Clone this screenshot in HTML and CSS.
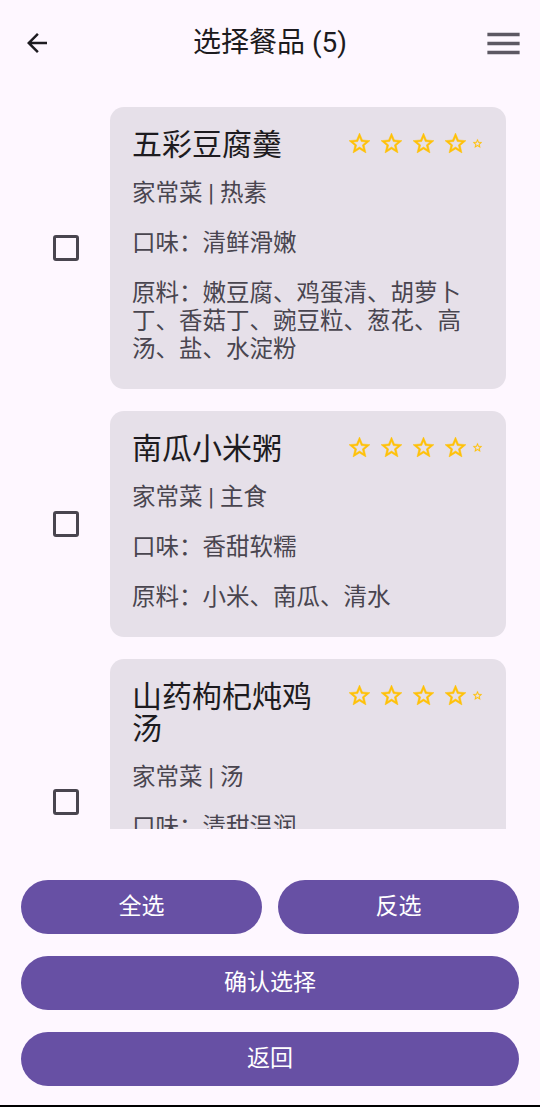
FILE: index.html
```html
<!DOCTYPE html>
<html lang="zh-CN">
<head>
  <meta charset="UTF-8">
  <meta name="viewport" content="width=device-width, initial-scale=1.0">
  <title>选择餐品</title>
  <link rel="stylesheet" href="styles.css">
</head>
<body>
  <svg class="defs" aria-hidden="true">
    <symbol id="star" viewBox="0 0 24 24">
      <path d="M22 9.24l-7.19-.62L12 2 9.19 8.63 2 9.24l5.46 4.73L5.82 21 12 17.27 18.18 21l-1.63-7.03L22 9.24zM12 15.4l-3.76 2.27 1-4.28-3.32-2.88 4.38-.38L12 6.1l1.71 4.04 4.38.38-3.32 2.88 1 4.28L12 15.4z"/>
    </symbol>
  </svg>

  <div class="page">
    <header class="topbar">
      <button class="icon-btn back">
        <svg viewBox="0 0 24 24"><path d="M20 11H7.83l5.59-5.59L12 4l-8 8 8 8 1.41-1.41L7.83 13H20v-2z"/></svg>
      </button>
      <h1 class="title">选择餐品 (5)</h1>
      <button class="icon-btn menu">
        <svg viewBox="0 0 24 24"><path d="M3 18h18v-2H3v2zm0-5h18v-2H3v2zm0-7v2h18V6H3z"/></svg>
      </button>
    </header>

    <div class="dish-list">
      <div class="dish-row">
        <input type="checkbox" class="check">
        <div class="dish-card">
          <div class="card-head">
            <h2 class="dish-name">五彩豆腐羹</h2>
            <div class="stars">
              <svg class="star"><use href="#star"/></svg>
              <svg class="star"><use href="#star"/></svg>
              <svg class="star"><use href="#star"/></svg>
              <svg class="star"><use href="#star"/></svg>
              <svg class="star small"><use href="#star"/></svg>
            </div>
          </div>
          <p class="tags">家常菜 | 热素</p>
          <p class="info">口味：清鲜滑嫩</p>
          <p class="info">原料：嫩豆腐、鸡蛋清、胡萝卜丁、香菇丁、豌豆粒、葱花、高汤、盐、水淀粉</p>
        </div>
      </div>

      <div class="dish-row">
        <input type="checkbox" class="check">
        <div class="dish-card">
          <div class="card-head">
            <h2 class="dish-name">南瓜小米粥</h2>
            <div class="stars">
              <svg class="star"><use href="#star"/></svg>
              <svg class="star"><use href="#star"/></svg>
              <svg class="star"><use href="#star"/></svg>
              <svg class="star"><use href="#star"/></svg>
              <svg class="star small"><use href="#star"/></svg>
            </div>
          </div>
          <p class="tags">家常菜 | 主食</p>
          <p class="info">口味：香甜软糯</p>
          <p class="info">原料：小米、南瓜、清水</p>
        </div>
      </div>

      <div class="dish-row">
        <input type="checkbox" class="check">
        <div class="dish-card">
          <div class="card-head">
            <h2 class="dish-name">山药枸杞炖鸡汤</h2>
            <div class="stars">
              <svg class="star"><use href="#star"/></svg>
              <svg class="star"><use href="#star"/></svg>
              <svg class="star"><use href="#star"/></svg>
              <svg class="star"><use href="#star"/></svg>
              <svg class="star small"><use href="#star"/></svg>
            </div>
          </div>
          <p class="tags">家常菜 | 汤</p>
          <p class="info">口味：清甜温润</p>
          <p class="info">原料：鸡腿肉、山药、枸杞、红枣、姜片、葱段、盐</p>
        </div>
      </div>

      <div class="dish-row">
        <input type="checkbox" class="check">
        <div class="dish-card">
          <div class="card-head">
            <h2 class="dish-name">番茄炒蛋</h2>
            <div class="stars">
              <svg class="star"><use href="#star"/></svg>
              <svg class="star"><use href="#star"/></svg>
              <svg class="star"><use href="#star"/></svg>
              <svg class="star"><use href="#star"/></svg>
              <svg class="star small"><use href="#star"/></svg>
            </div>
          </div>
          <p class="tags">家常菜 | 热荤</p>
          <p class="info">口味：酸甜可口</p>
          <p class="info">原料：番茄、鸡蛋、葱花、盐、糖</p>
        </div>
      </div>

      <div class="dish-row">
        <input type="checkbox" class="check">
        <div class="dish-card">
          <div class="card-head">
            <h2 class="dish-name">清炒时蔬</h2>
            <div class="stars">
              <svg class="star"><use href="#star"/></svg>
              <svg class="star"><use href="#star"/></svg>
              <svg class="star"><use href="#star"/></svg>
              <svg class="star"><use href="#star"/></svg>
              <svg class="star small"><use href="#star"/></svg>
            </div>
          </div>
          <p class="tags">家常菜 | 热素</p>
          <p class="info">口味：清淡爽口</p>
          <p class="info">原料：青菜、蒜末、盐</p>
        </div>
      </div>
    </div>

    <footer class="actions">
      <div class="action-row">
        <button class="pill">全选</button>
        <button class="pill">反选</button>
      </div>
      <button class="pill">确认选择</button>
      <button class="pill">返回</button>
    </footer>

    <div class="nav-bar"></div>
  </div>
</body>
</html>
```

FILE: styles.css
```css
body {
  margin: 0;
  background-color: #fef7ff;
  font-family: Roboto, "Noto Sans CJK SC", sans-serif;
  color: #1d1b20;
}

.defs {
  position: absolute;
  width: 0;
  height: 0;
}

.page {
  display: flex;
  flex-direction: column;
  height: 1107px;
}

/* top app bar */
.topbar {
  display: grid;
  grid-template-columns: 1fr auto 1fr;
  align-items: center;
  height: 86px;
  padding: 0 15px;
}

.icon-btn {
  display: flex;
  padding: 0;
  border: none;
  background: none;
}

.back {
  justify-self: start;
  margin-left: 7px;
}

.back svg {
  width: 30px;
  height: 30px;
  fill: #1d1b20;
}

.menu {
  justify-self: end;
}

.menu svg {
  width: 43px;
  height: 43px;
  fill: #5d5863;
}

.title {
  margin: 0;
  font-size: 28px;
  font-weight: 400;
  line-height: 36px;
}

/* dish list */
.dish-list {
  height: 743px;
  overflow: hidden;
  padding-top: 21px;
  box-sizing: border-box;
  flex: none;
}

.dish-row {
  display: flex;
  align-items: center;
  gap: 31px;
  padding: 0 34px 0 53px;
  margin-bottom: 22px;
}

.check {
  appearance: none;
  flex: none;
  width: 26px;
  height: 26px;
  margin: 0;
  border: 3px solid #49454f;
  border-radius: 3px;
  box-sizing: border-box;
}

.dish-card {
  flex: 1;
  background-color: #e6e0e9;
  border-radius: 14px;
  padding: 22px 24px 26px 22px;
}

.card-head {
  display: flex;
  align-items: flex-start;
  gap: 10px;
}

.dish-name {
  flex: 1;
  margin: 0;
  font-size: 30px;
  font-weight: 400;
  line-height: 32px;
  color: #1d1b20;
}

.stars {
  display: flex;
  align-items: center;
  gap: 7px;
  margin: 2px -1px 0 0;
}

.star {
  width: 25px;
  height: 25px;
  fill: #ffc107;
  stroke: #ffc107;
  stroke-width: 0.5;
}

.star.small {
  width: 11px;
  height: 11px;
  margin-left: -2.5px;
}

.tags,
.info {
  margin: 22px 0 0;
  font-size: 23.5px;
  line-height: 28px;
  color: #49454f;
}

.tags {
  margin-top: 18px;
}

/* bottom buttons */
.actions {
  display: flex;
  flex-direction: column;
  gap: 22px;
  padding: 51px 21px 0;
}

.action-row {
  display: flex;
  gap: 16px;
}

.action-row .pill {
  flex: 1;
}

.pill {
  height: 54px;
  padding: 0 0 1px;
  border: none;
  border-radius: 27px;
  background-color: #6750a4;
  color: #fff;
  font-family: Roboto, "Noto Sans CJK SC", sans-serif;
  font-size: 23px;
  line-height: 30px;
}

.nav-bar {
  margin-top: auto;
  height: 2px;
  background-color: #000;
}
```
